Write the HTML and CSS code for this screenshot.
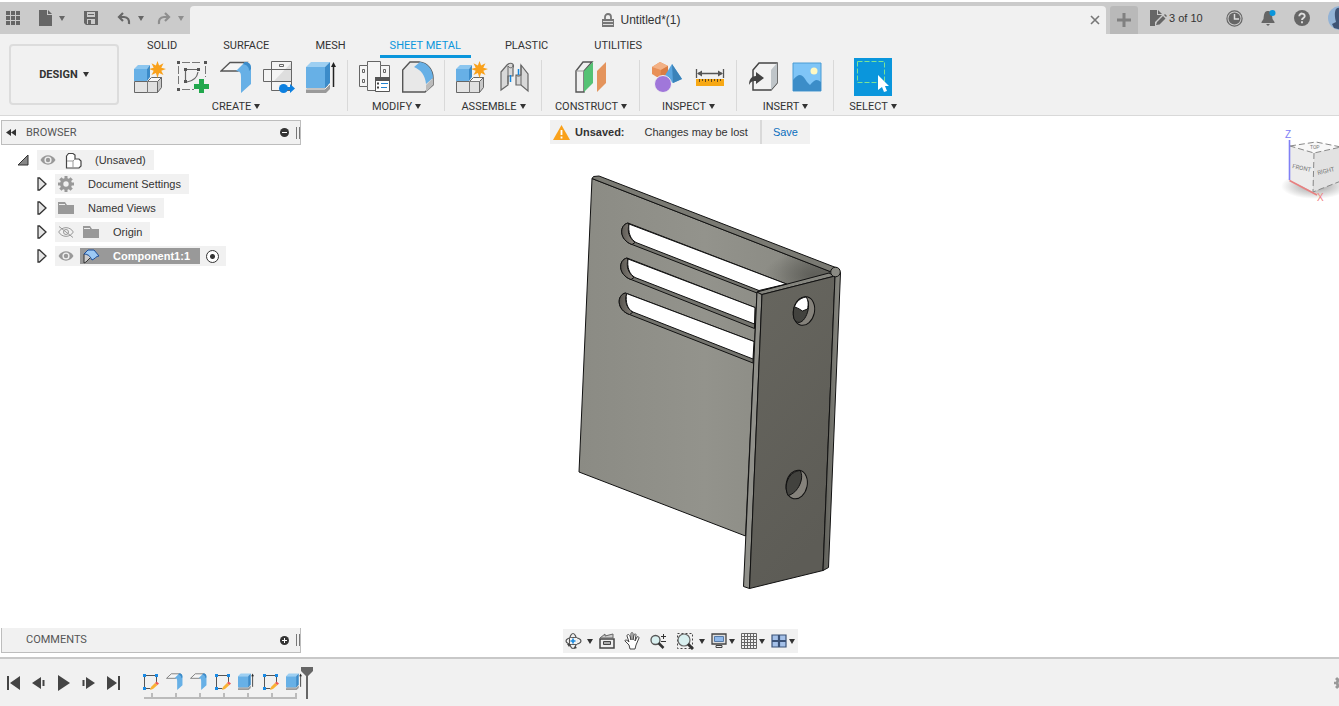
FILE: index.html
```html
<!DOCTYPE html>
<html lang="en">
<head>
<meta charset="utf-8">
<title>Untitled*(1)</title>
<meta name="viewport" content="width=device-width, initial-scale=1">
<link rel="stylesheet" href="styles.css">
</head>
<body>
<svg class="defs" aria-hidden="true">
  <defs>
    <symbol id="component" viewBox="0 0 32 32">
      <path d="M.500 20.500h13v11H.500z" fill="#e4e4e4" stroke="#666"/>
      <path d="M13.500 20.500l4-4h10l-4 4z" fill="#f8f8f8" stroke="#666"/>
      <path d="M13.500 20.500h10v11h-10z" fill="#e0e0e0" stroke="#777"/>
      <path d="M23.500 20.500l4-4v10l-4 5z" fill="#c8c8c8" stroke="#666"/>
      <path d="M0 8h13v12H0z" fill="#67b0e6"/><path d="M0 8l4-4h12l-3 4z" fill="#8cc6ef"/><path d="M13 8l3-4v12l-3 4z" fill="#3b8bc9"/>
      <path d="M23.500 0l1.600 4.500 4.400-2.200-2.200 4.400 4.700 1.300-4.700 1.700 2.200 4.300-4.400-2.100L23.500 17l-1.600-5-4.400 2.100 2.200-4.400-4.700-1.700 4.700-1.300-2.200-4.400 4.400 2.200z" fill="#f9a11b"/>
    </symbol>
    <symbol id="extrude" viewBox="0 0 32 32">
      <path d="M0 28l4-4h20v4l-4 4H0z" fill="#9a9a9a"/><path d="M0 28h19l5-5" fill="none" stroke="#eee"/>
      <path d="M0 6h19v21H0z" fill="#67b0e6"/><path d="M0 6l5-5h19l-5 5z" fill="#9dcff2"/><path d="M19 6l5-5v21l-5 5z" fill="#3b8bc9"/>
      <path d="M27.500 26V5" stroke="#222" stroke-width="1.500"/><path d="M25 6l2.500-5L30 6z" fill="#222"/>
    </symbol>
    <symbol id="flange" viewBox="0 0 32 32">
      <path d="M1 10l9-8.500h17l-9 8.500z" fill="#f5f5f5" stroke="#555" stroke-width="1.300"/>
      <path d="M16 10c5 0 5 3 5 7v15l10-9V8c0-5-2-7-6-7z" fill="#67b0e6"/><path d="M25 1c4 0 6 2 6 7l-2 2c0-4-2-6-6-7z" fill="#3b8bc9"/>
    </symbol>
    <symbol id="sketch" viewBox="0 0 17 18">
      <path d="M2.500 2.500h12v8M2.500 2.500v13h6" fill="none" stroke="#555"/>
      <path d="M1 1h3v3H1zM13 1h3v3h-3zM1 14h3v3H1z" fill="#1a8be6"/>
      <path d="M8 17l1-3 4-4 2.500 2-4.500 4z" fill="#f9b234"/><path d="M13 10l1.500-1.500 2.500 2-1.500 1.500z" fill="#ee5858"/>
    </symbol>
    <symbol id="gear" viewBox="0 0 16 16">
      <path d="M6.500 0h3v2.200l1.400.6 1.600-1.600 2.300 2.300-1.600 1.600.6 1.400H16v3h-2.200l-.6 1.400 1.600 1.600-2.300 2.300-1.600-1.600-1.400.6V16h-3v-2.200l-1.400-.6-1.600 1.600-2.300-2.300 1.600-1.600-.6-1.400H0v-3h2.200l.6-1.400L1.200 3.500l2.300-2.300 1.600 1.600 1.400-.6zM8 5.300a2.700 2.700 0 100 5.400 2.700 2.700 0 000-5.400z" fill="#999" fill-rule="evenodd"/>
    </symbol>
    <symbol id="eye" viewBox="0 0 16 12">
      <path d="M.5 6C4-.2 12-.2 15.500 6 12 12.200 4 12.200.5 6z" fill="#999"/><circle cx="8" cy="6" r="3.600" fill="#f0f0f0"/><circle cx="8" cy="6" r="2.200" fill="#999"/>
    </symbol>
    <symbol id="folder" viewBox="0 0 16 14"><path d="M0 1h7l2 3h7v9H0z" fill="#999"/><path d="M1 3.500h6" stroke="#eee"/></symbol>
    <symbol id="closed" viewBox="0 0 10 14"><path d="M1 1h1.500L9 7l-6.500 6H1z" fill="#e4e4e4" stroke="#333" stroke-width="1.300"/></symbol>
  </defs>
</svg>

<header class="topbar">
  <div class="quick">
    <button class="tool" aria-label="Data panel"><svg width="14" height="14" viewBox="0 0 14 14"><path d="M0 0h4v4H0zM5 0h4v4H5zM10 0h4v4h-4zM0 5h4v4H0zM5 5h4v4H5zM10 5h4v4h-4zM0 10h4v4H0zM5 10h4v4H5zM10 10h4v4h-4z" fill="#666"/></svg></button>
    <button class="tool spaced" aria-label="File"><svg width="13" height="16" viewBox="0 0 13 16"><path d="M0 0h8v5h5v11H0zM9 0l4 4H9z" fill="#666"/></svg><i class="caret"></i></button>
    <button class="tool" aria-label="Save"><svg width="14" height="14" viewBox="0 0 14 14"><path d="M0 0h14v14H2l-2-2z" fill="#666"/><path d="M3 1h8v5H3zM3 8h8v5H3z" fill="#cbcbcb"/><path d="M4 3.500h6" stroke="#666"/><path d="M4 9h3v4H4z" fill="#666"/></svg></button>
    <div class="history">
      <button class="tool spaced" aria-label="Undo"><svg width="14" height="13" viewBox="0 0 14 13"><path d="M6 1L2 5l4 4M2 5h5c4 0 5.500 3 5 7" fill="none" stroke="#666" stroke-width="2.200"/></svg><i class="caret"></i></button>
      <button class="tool spaced faded" aria-label="Redo"><svg width="14" height="13" viewBox="0 0 14 13"><path d="M8 1l4 4-4 4M12 5H7c-4 0-5.500 3-5 7" fill="none" stroke="#666" stroke-width="2.200"/></svg><i class="caret"></i></button>
    </div>
  </div>
  <div class="doc-tab">
    <h1 class="doc-title"><svg width="12" height="14" viewBox="0 0 12 14"><path d="M3 6V4a3 3 0 016 0v2" fill="none" stroke="#777" stroke-width="1.800"/><path d="M0 6h12v8H0z" fill="#777"/><path d="M1 8.500h10M1 11.500h10" stroke="#ddd"/></svg>Untitled*(1)</h1>
    <button class="tool close" aria-label="Close"><svg width="10" height="10" viewBox="0 0 10 10"><path d="M1 1l8 8M9 1L1 9" stroke="#777" stroke-width="1.600"/></svg></button>
  </div>
  <button class="new-tab" aria-label="New tab"><svg width="14" height="14" viewBox="0 0 14 14"><path d="M7 0v14M0 7h14" stroke="#808080" stroke-width="3"/></svg></button>
  <div class="account">
    <button class="tool docs"><svg width="17" height="16" viewBox="0 0 17 16"><path d="M0 0h7v5h5L5 12v4H0zM8 0l4 4H8z" fill="#666"/><path d="M6 15l1-3 6-6 2.500 2.500-6 6zM14 5l1-1 2 2-1 1z" fill="#666"/></svg>3 of 10</button>
    <button class="tool" aria-label="Job status"><svg width="17" height="17" viewBox="0 0 17 17"><circle cx="8.500" cy="8.500" r="7.600" fill="none" stroke="#666" stroke-width="1.200"/><circle cx="8.500" cy="8.500" r="6" fill="#666"/><path d="M8.500 4v5H13" fill="none" stroke="#ddd" stroke-width="1.500"/></svg></button>
    <button class="tool bell" aria-label="Notifications"><svg width="15" height="16" viewBox="0 0 15 16"><path d="M6 1h2c3 1 3 4 3.500 8l2 3v1H.5v-1l2-3C3 5 3 2 6 1zM5 14h4l-2 2z" fill="#666"/><circle cx="11.500" cy="3" r="3" fill="#0a96dc"/></svg></button>
    <button class="tool" aria-label="Help"><svg width="16" height="16" viewBox="0 0 16 16"><circle cx="8" cy="8" r="8" fill="#666"/><path d="M5.300 6.200c0-3.600 5.600-3.400 5.400 0C10.600 8 8 8 8 10M8 11.300v2" fill="none" stroke="#ddd" stroke-width="1.900"/></svg></button>
    <button class="tool" aria-label="Profile"><svg width="24" height="24" viewBox="0 0 24 24"><circle cx="12" cy="12" r="12" fill="#93b3d6"/><path d="M8 3c4-3 9 0 9 5 0 3-2 5-2 7l6 4-7 5-8-2-2-4 4-2c-1-4-2-9 0-13z" fill="#3f5475"/></svg></button>
  </div>
</header>

<div class="ribbon">
  <button class="workspace">DESIGN<i class="caret"></i></button>
  <div class="ribbon-main">
    <nav class="tabs">
      <button class="tab">SOLID</button><button class="tab">SURFACE</button><button class="tab">MESH</button><button class="tab active">SHEET METAL</button><button class="tab">PLASTIC</button><button class="tab">UTILITIES</button>
    </nav>
    <div class="groups">
      <section class="group">
        <div class="icons">
          <button class="tool" aria-label="New component"><svg width="32" height="32"><use href="#component"/></svg></button>
          <button class="tool" aria-label="Create sketch"><svg width="32" height="32" viewBox="0 0 32 32"><path d="M1.500 5v19M5 1.500h20M28.500 5v11M5 28.500h12" fill="none" stroke="#777" stroke-dasharray="8 2"/><path d="M8.500 19V8.500H20M21 11c-1 6-5 9-11 10" fill="none" stroke="#666" stroke-width="1.200"/><path d="M0 0h3v3H0zM27 0h3v3h-3zM0 27h3v3H0zM7 7h3v3H7zM20 7h3v3h-3zM7 19h3v3H7z" fill="#555"/><path d="M22 18h5v5h5v5h-5v4h-5v-4h-5v-5h5z" fill="#22a84d"/></svg></button>
          <button class="tool" aria-label="Flange"><svg width="32" height="32"><use href="#flange"/></svg></button>
          <button class="tool" aria-label="Unfold"><svg width="32" height="32" viewBox="0 0 32 32"><path d="M8.500.500h20v29h-20z" fill="#f4f4f4" stroke="#666"/><path d="M.500 8.500h28v12H.500z" fill="#f4f4f4" stroke="#666"/><path d="M28 2v18H11z" fill="#dedede"/><path d="M8.500 8.500v12M8.500 8.500h20M16.500 3.500h4v2h-4z" fill="none" stroke="#666"/><circle cx="20.500" cy="27.500" r="4.500" fill="#0d80e0"/><path d="M24 26h3v-3l5 4.500-5 4.500v-3h-3z" fill="#0d80e0"/></svg></button>
          <button class="tool" aria-label="Extrude"><svg width="32" height="32"><use href="#extrude"/></svg></button>
        </div>
        <button class="group-label">CREATE<i class="caret"></i></button>
      </section>
      <section class="group">
        <div class="icons">
          <button class="tool" aria-label="Sheet metal rules"><svg width="32" height="32" viewBox="0 0 32 32"><path d="M8.500.500h13v4h9v12h-9v13h-13v-4h-8v-21h8z" fill="#f5f5f5" stroke="#666"/><path d="M8.500 4.500v21M21.500 4.500v12M3.500 8.500h2v3h-2zM3.500 18.500h2v3h-2zM24.500 8.500h2v3h-2z" fill="none" stroke="#666"/><path d="M16.500 16.500h14v14h-14z" fill="#fff" stroke="#555"/><path d="M16 16h15v4H16z" fill="#555"/><path d="M18 22.500h2M18 26.500h2" stroke="#444" stroke-width="2"/><path d="M22 22.500h7M22 26.500h6" stroke="#2383d1"/></svg></button>
          <button class="tool" aria-label="Fillet"><svg width="32" height="32" viewBox="0 0 32 32"><path d="M.700 9L8 1h9c9 1 14 8 14 16v7l-8 7H.700z" fill="#e8e8e8" stroke="#555" stroke-width="1.400"/><path d="M12 6l6-5c8 1 13 8 13 16l-7 6C23 14 19 9 12 6z" fill="#67b0e6"/><path d="M24 24l7-7v7l-7 7z" fill="#bbb"/></svg></button>
        </div>
        <button class="group-label">MODIFY<i class="caret"></i></button>
      </section>
      <section class="group">
        <div class="icons">
          <button class="tool" aria-label="Assemble component"><svg width="32" height="32"><use href="#component"/></svg></button>
          <button class="tool" aria-label="Joint"><svg width="32" height="32" viewBox="0 0 32 32"><path d="M2 11l6-7c3-3 8-2 6 3v8H9v9l-7 5z" fill="#d8d8d8" stroke="#666" stroke-width="1.200"/><path d="M9 5v18M9 5c2 3 5 2 5-1" fill="none" stroke="#666"/><path d="M22 4l7 9v17l-7-6h-5V14h5z" fill="#d8d8d8" stroke="#666" stroke-width="1.200"/><path d="M22 4v20M17 14c2 2 4 1 5 0" fill="none" stroke="#666"/><path d="M11.500 14v7M19.500 8v6" stroke="#1688de" stroke-width="1.500"/></svg></button>
        </div>
        <button class="group-label">ASSEMBLE<i class="caret"></i></button>
      </section>
      <section class="group wide">
        <div class="icons">
          <button class="tool" aria-label="Offset plane"><svg width="32" height="32" viewBox="0 0 32 32"><path d="M1 10l7-9h9l-8 9v21H1z" fill="#f0f0f0" stroke="#555" stroke-width="1.400"/><path d="M1 10h8" stroke="#999"/><path d="M9 10l9-9v21l-9 9z" fill="#55c274"/><path d="M22 10l9-9v21l-9 9z" fill="#e4945c"/></svg></button>
        </div>
        <button class="group-label">CONSTRUCT<i class="caret"></i></button>
      </section>
      <section class="group">
        <div class="icons">
          <button class="tool" aria-label="Interference"><svg width="32" height="32" viewBox="0 0 32 32"><path d="M1 6l8-5 8 4v8l-8 5-8-5z" fill="#e89058"/><path d="M1 6l8-5 8 4-7 4z" fill="#f3b185"/><path d="M10 9l7-4v8l-8 5z" fill="#d97d43"/><path d="M21 3l10 15-9 4-9-6z" fill="#5aa5de"/><path d="M21 3l10 15-9 4z" fill="#3b83b9"/><circle cx="12" cy="23" r="8.500" fill="#a077da" stroke="#f0f0f0"/></svg></button>
          <button class="tool" aria-label="Measure"><svg width="32" height="32" viewBox="0 0 32 32"><path d="M2.500 8v9M29.500 8v9M4 12.500h24" stroke="#555" stroke-width="1.300"/><path d="M3 12.500l5-3v6zM29 12.500l-5-3v6z" fill="#555"/><path d="M2 18h28v7H2z" fill="#f7a814"/><path d="M5.500 18v3M8.500 18v2M11.500 18v3M14.500 18v2M17.500 18v3M20.500 18v2M23.500 18v3M26.500 18v2" stroke="#644a1c"/></svg></button>
        </div>
        <button class="group-label">INSPECT<i class="caret"></i></button>
      </section>
      <section class="group">
        <div class="icons">
          <button class="tool" aria-label="Insert derive"><svg width="32" height="32" viewBox="0 0 32 32"><path d="M5 9l6-7h18v20l-6 7H5z" fill="#f2f2f2" stroke="#444" stroke-width="1.500"/><path d="M23 9l6-7v20l-6 7z" fill="#bfc5c9"/><path d="M1 24c0-6 3-9 7-9v-4l8 6-8 6v-3c-3 0-5 0-7 4z" fill="#424242"/></svg></button>
          <button class="tool" aria-label="Insert image"><svg width="32" height="32" viewBox="0 0 32 32"><path d="M2 2h28v28H2z" fill="#7fc5f7" stroke="#4a9cd4"/><path d="M2 19c6-7 9-7 14 2l3 3c5-6 7-6 11-3v9H2z" fill="#3c8dc8"/><circle cx="23" cy="10" r="3.500" fill="#fff8c2"/></svg></button>
        </div>
        <button class="group-label">INSERT<i class="caret"></i></button>
      </section>
      <section class="group last">
        <div class="icons">
          <button class="tool select-tool" aria-label="Select"><svg width="38" height="38" viewBox="0 0 38 38"><path d="M3.500 3.500h27v21h-27z" fill="none" stroke="#7be495" stroke-dasharray="5 2"/><path d="M24 17v15l4-3 2 5 3-1-2-5h4z" fill="#fff"/></svg></button>
        </div>
        <button class="group-label">SELECT<i class="caret"></i></button>
      </section>
    </div>
  </div>
</div>

<main class="canvas">
  <aside class="left">
    <div class="panel">
      <svg width="10" height="7" viewBox="0 0 10 7"><path d="M5 0v7L0 3.500zM10 0v7L5 3.500z" fill="#333"/></svg>
      <h2 class="panel-title">BROWSER</h2>
      <button class="tool" aria-label="Collapse browser"><svg width="9" height="9" viewBox="0 0 9 9"><circle cx="4.500" cy="4.500" r="4.500" fill="#333"/><path d="M2 4.500h5" stroke="#fff"/></svg></button>
      <i class="grip"></i>
    </div>
    <ul class="tree">
      <li class="node root"><svg width="12" height="12" viewBox="0 0 12 12"><path d="M11 1v10H1z" fill="#888" stroke="#333"/></svg>
        <span class="chip"><svg width="16" height="12"><use href="#eye"/></svg><svg class="part" width="17" height="17" viewBox="0 0 17 17"><path d="M1.500 4l2-2.500h4.500L10 3v4h4l2 2v5l-2 2H1.500z" fill="#fff" stroke="#444" stroke-width="1.200"/><path d="M8 9v7M2 9h6l2-2" fill="none" stroke="#999"/></svg><span class="root-name">(Unsaved)</span></span></li>
      <li class="node"><svg width="10" height="14"><use href="#closed"/></svg><span class="chip"><svg width="16" height="16"><use href="#gear"/></svg><span>Document Settings</span></span></li>
      <li class="node"><svg width="10" height="14"><use href="#closed"/></svg><span class="chip"><svg width="16" height="14"><use href="#folder"/></svg><span>Named Views</span></span></li>
      <li class="node"><svg width="10" height="14"><use href="#closed"/></svg><span class="chip"><svg width="16" height="12" viewBox="0 0 16 12"><path d="M.7 6C4 .2 12 .2 15.300 6 12 11.800 4 11.800.7 6zM1 .5l14 11" fill="none" stroke="#999"/><circle cx="8" cy="6" r="2.500" fill="none" stroke="#999"/></svg><svg class="second" width="16" height="14"><use href="#folder"/></svg><span>Origin</span></span></li>
      <li class="node"><svg width="10" height="14"><use href="#closed"/></svg><span class="chip picked"><svg width="16" height="12"><use href="#eye"/></svg><span class="selected"><svg width="18" height="15" viewBox="0 0 18 15"><path d="M1 5v9l2-1 5-5" fill="#ccc" stroke="#333"/><path d="M1 5l4-4h6c2 2 3 4 5 6-3 0-4 3-7 4-2-4-4-6-8-6z" fill="#9cc9f5" stroke="#1c4f9c"/></svg><span>Component1:1</span></span><input type="radio" class="activate" aria-label="Activate Component1:1" checked></span></li>
    </ul>
    <div class="panel comments">
      <h2 class="panel-title">COMMENTS</h2>
      <button class="tool" aria-label="Expand comments"><svg width="9" height="9" viewBox="0 0 9 9"><circle cx="4.500" cy="4.500" r="4.500" fill="#333"/><path d="M2 4.500h5M4.500 2v5" stroke="#fff"/></svg></button>
      <i class="grip"></i>
    </div>
  </aside>

  <div class="center">
    <div class="notice">
      <svg width="17" height="15" viewBox="0 0 17 15"><path d="M8.500 0L17 15H0z" fill="#f9a11b"/><path d="M8.500 5v5M8.500 11.500v2" stroke="#fff" stroke-width="1.800"/></svg>
      <strong>Unsaved:</strong><span class="message">Changes may be lost</span><a class="save" href="#save">Save</a>
    </div>
    <svg class="model" width="280" height="425" viewBox="570 170 280 425" role="img" aria-label="Sheet metal bracket">
      <defs>
        <linearGradient id="plate" x1="0" y1="0" x2="1" y2="0"><stop offset="0" stop-color="#8b8b84"/><stop offset=".5" stop-color="#93938c"/><stop offset=".8" stop-color="#8c8c85"/><stop offset="1" stop-color="#6c6c66"/></linearGradient>
        <linearGradient id="face" x1="0" y1="0" x2=".3" y2="1"><stop offset="0" stop-color="#67665f"/><stop offset="1" stop-color="#5d5c56"/></linearGradient>
        <radialGradient id="shade"><stop offset="0" stop-color="#4f4f4a" stop-opacity=".6"/><stop offset="1" stop-color="#4f4f4a" stop-opacity="0"/></radialGradient>
        <linearGradient id="bend" x1="0" y1="0" x2="1" y2="0"><stop offset="0" stop-color="#5d5d57"/><stop offset="1" stop-color="#8a8a83"/></linearGradient>
        <linearGradient id="wall" x1="0" y1="0" x2="1" y2="0"><stop offset="0" stop-color="#55524c"/><stop offset="1" stop-color="#8e8982"/></linearGradient>
        <clipPath id="plateClip"><path d="M592 179L830 271.500V274L757 291.500 745 536 579 472z"/></clipPath>
      </defs>
      <g stroke="#111" stroke-linejoin="round">
        <path d="M592 178.500L830 271.500V274L757 292 745.500 536 579 472z" fill="url(#plate)"/>
        <ellipse cx="812" cy="275" rx="48" ry="24" fill="url(#shade)" stroke="none" clip-path="url(#plateClip)"/>
        <path d="M592 178.500L593.500 176.500 599 176 837 268 830 271.500z" fill="#7a7a73"/>
        <path d="M628 223c-9 2-9 17 4 21.500L757 293l2-3L786.500 284z" fill="#74746e"/>
        <path d="M627 258c-9 2-9 17 4 21.500L754.500 328.500 755 307.500z" fill="#74746e"/>
        <path d="M625.500 293c-9 2-9 17 4 21.500L753 363 754 341.500z" fill="#74746e"/>
        <path d="M628 223c-9 2-9 17 4 21.500l3-2c-6-5-8-11-6-18.500zM627 258c-9 2-9 17 4 21.500l3-2c-6-5-8-11-6-18.500zM625.500 293c-9 2-9 17 4 21.500l3-2c-6-5-8-11-6-18.500z" fill="url(#wall)"/>
        <g fill="#fff">
          <path d="M629 224L786.500 284 759 290.500 636 242.500C630 239 628 232 629 224z"/>
          <path d="M628 259L755 307.500 754.500 324 635 277.500C629 274 627 267 628 259z"/>
          <path d="M626.500 293.500L754 341.500 753 359 633 312C627 309 625.500 302 626.500 293.500z"/>
        </g>
        <path d="M757 292L762 294.500 749.500 588.500 743.500 586.500z" fill="#90908a"/>
        <path d="M757 292L829 273 835 276 762 294.500z" fill="#85857e"/>
        <path d="M762 294.500L835 276 823 570.500 749.500 588.500z" fill="url(#face)"/>
        <path d="M835 276L840.500 272.500 828.500 567.500 823 570.500z" fill="url(#bend)"/>
        <circle cx="835.500" cy="272" r="4.800" fill="#8a8a83"/>
        <ellipse cx="804" cy="311" rx="10.500" ry="14.500" transform="rotate(12 804 311)" fill="#85827b"/>
        <path d="M806 297c-9 0-15 11-12 22 7 11 17-7 14-18z" fill="#42423e"/>
        <path d="M806 297c-6 1-10 5-11.500 10 4 1 6 3 8 4l5-2c1-4 1-9-1.500-12z" fill="#fff"/>
        <ellipse cx="796.700" cy="484.500" rx="10.500" ry="14.500" transform="rotate(12 796.700 484.500)" fill="#85827b"/>
        <path d="M800 470.500c-11 1-17 14-12 25 10-2 17-18 12-25z" fill="#42423e"/>
      </g>
    </svg>
    <div class="navbar">
      <button class="tool" aria-label="Orbit"><svg width="17" height="18" viewBox="0 0 17 18"><ellipse cx="8" cy="9" rx="3.500" ry="7.500" fill="#f1f1f1" stroke="#555" stroke-width="1.200"/><ellipse cx="8.500" cy="9" rx="7.500" ry="3.500" fill="none" stroke="#555" stroke-width="1.200"/><path d="M5 6h7v6H5z" fill="#f1f1f1"/><path d="M2 12h4l-2 3zM9 17l3-1-2-2z" fill="#444"/><path d="M8 6.500v5M5.500 9h5" stroke="#1688de" stroke-width="1.600"/></svg><i class="caret"></i></button>
      <button class="tool" aria-label="Look at"><svg width="16" height="18" viewBox="0 0 16 18"><path d="M1 7h14v9H1z" fill="#eee" stroke="#444" stroke-width="1.500"/><path d="M4.500 9.500h7v3h-7z" fill="#aaa" stroke="#444"/><path d="M1 6l5-4v2l8-2v4z" fill="#ccc" stroke="#666"/></svg></button>
      <button class="tool gap-left" aria-label="Pan"><svg width="17" height="18" viewBox="0 0 17 18"><path d="M6 17l-1-4-4-4c0-2 2-1 4 1L3 4c0-2 2-2 3 0l1 4V2c0-2 2-2 2 0v6l1-5c1-2 2-1 2 0l-1 6 2-4c1-1 2 0 2 1l-3 7-1 4z" fill="#fff" stroke="#444"/></svg></button>
      <button class="tool gap-left" aria-label="Zoom"><svg width="17" height="18" viewBox="0 0 17 18"><circle cx="5.500" cy="8" r="4.500" fill="#d9f0f0" stroke="#555" stroke-width="1.300"/><path d="M8.500 11l5 5" stroke="#333" stroke-width="2.500"/><path d="M11 4.500h5M13.500 2v5M11 9.500h5" stroke="#333"/></svg></button>
      <button class="tool gap-left" aria-label="Fit"><svg width="18" height="18" viewBox="0 0 18 18"><path d="M1.500 1.500h15v15h-15z" fill="none" stroke="#444" stroke-dasharray="2 2"/><circle cx="8" cy="8" r="6" fill="#d9f0f0" stroke="#666" stroke-width="1.200"/><path d="M12 12l5 5" stroke="#333" stroke-width="3"/></svg><i class="caret"></i></button>
      <button class="tool tight" aria-label="Display settings"><svg width="16" height="16" viewBox="0 0 16 16"><path d="M1 1h14v10H1z" fill="#ddd" stroke="#444" stroke-width="1.300"/><path d="M3.500 3.500h9v5h-9z" fill="#8fb8ea" stroke="#567ba8"/><path d="M5 12.500h6v2H5z" fill="#eee" stroke="#444"/></svg><i class="caret"></i></button>
      <button class="tool tight" aria-label="Grid settings"><svg width="16" height="16" viewBox="0 0 16 16"><path d="M.5.500h15v15H.5zM3.500 0v16M6.500 0v16M9.500 0v16M12.500 0v16M0 3.500h16M0 6.500h16M0 9.500h16M0 12.500h16" fill="none" stroke="#666"/></svg><i class="caret"></i></button>
      <button class="tool tight" aria-label="Viewports"><svg width="16" height="16" viewBox="0 0 16 16"><path d="M1 2h6.500v5.500H1zM8.500 2H15v5.500H8.500zM1 8.500h6.500V14H1zM8.500 8.500H15V14H8.500z" fill="#a4c0e8" stroke="#3b5277" stroke-width="1.200"/></svg><i class="caret"></i></button>
    </div>
  </div>

  <div class="right">
    <svg class="cube" width="59" height="90" viewBox="1280 122 59 90" role="img" aria-label="View cube">
      <defs><radialGradient id="ground"><stop offset="0" stop-color="#999"/><stop offset="1" stop-color="#999" stop-opacity="0"/></radialGradient></defs>
      <ellipse cx="1315" cy="186" rx="34" ry="13" fill="url(#ground)"/>
      <path d="M1290 146L1316 142 1341 147 1314 153z" fill="#f8f8f8"/><path d="M1290 146L1314 153 1313 192 1290 180z" fill="#ececec"/><path d="M1314 153L1341 147V181L1313 192z" fill="#e2e2e2"/>
      <path d="M1290 146L1316 142 1341 147 1314 153zM1314 153L1313 192 1341 181" fill="none" stroke="#888" stroke-dasharray="6 3"/>
      <path d="M1289.500 140v40" stroke="#8080f5" stroke-width="1.600"/><path d="M1289.500 180.500L1317 195" stroke="#e88080" stroke-width="1.600"/>
      <text class="face" x="1292" y="168" transform="rotate(12 1292 168)">FRONT</text>
      <text class="face" x="1318" y="175" transform="rotate(-14 1318 175)">RIGHT</text>
      <text class="face top" x="1310" y="149">TOP</text>
      <text class="axis z" x="1285" y="138">Z</text><text class="axis x" x="1317" y="201">X</text>
    </svg>
  </div>
</main>

<footer class="timeline">
  <div class="playback">
    <button class="tool" aria-label="Go to start"><svg width="13" height="14" viewBox="0 0 13 14"><path d="M0 0h2v14H0zM13 0v14L3 7z" fill="#444"/></svg></button>
    <button class="tool" aria-label="Step back"><svg width="13" height="12" viewBox="0 0 13 12"><path d="M9 0v12L0 6zM10.500 3h2v6h-2z" fill="#444"/></svg></button>
    <button class="tool" aria-label="Play"><svg width="12" height="16" viewBox="0 0 12 16"><path d="M0 0l12 8-12 8z" fill="#444"/></svg></button>
    <button class="tool" aria-label="Step forward"><svg width="13" height="12" viewBox="0 0 13 12"><path d="M4 0v12l9-6zM.5 3h2v6h-2z" fill="#444"/></svg></button>
    <button class="tool" aria-label="Go to end"><svg width="13" height="14" viewBox="0 0 13 14"><path d="M11 0h2v14h-2zM0 0v14l10-7z" fill="#444"/></svg></button>
  </div>
  <div class="features">
    <button class="tool feature" aria-label="Sketch 1"><svg width="17" height="18"><use href="#sketch"/></svg></button>
    <button class="tool feature" aria-label="Flange 1"><svg width="17" height="17"><use href="#flange"/></svg></button>
    <button class="tool feature" aria-label="Flange 2"><svg width="17" height="17"><use href="#flange"/></svg></button>
    <button class="tool feature" aria-label="Sketch 2"><svg width="17" height="18"><use href="#sketch"/></svg></button>
    <button class="tool feature" aria-label="Extrude 1"><svg width="17" height="17"><use href="#extrude"/></svg></button>
    <button class="tool feature" aria-label="Sketch 3"><svg width="17" height="18"><use href="#sketch"/></svg></button>
    <button class="tool feature" aria-label="Extrude 2"><svg width="17" height="17"><use href="#extrude"/></svg></button>
    <svg class="marker" width="12" height="32" viewBox="0 0 12 32"><path d="M0 0h12v4L7 9v23H5V9L0 4z" fill="#666"/></svg>
  </div>
  <button class="tool settings" aria-label="Timeline settings"><svg width="14" height="14" viewBox="0 0 16 16"><use href="#gear"/></svg></button>
</footer>
</body>
</html>
```
FILE: styles.css
```css
* { box-sizing: border-box; }

body {
  margin: 0;
  min-height: 100vh;
  display: flex;
  flex-direction: column;
  overflow-x: hidden;
  background: #fff;
  color: #333;
  font: 11px/16px "Liberation Sans", Arial, sans-serif;
}

svg { display: block; flex: none; }
.defs { position: absolute; width: 0; height: 0; }
h1, h2 { margin: 0; font-weight: normal; }

button {
  padding: 0;
  border: 0;
  background: none;
  color: inherit;
  font: inherit;
}

.tool { display: flex; align-items: center; flex: none; }

.caret {
  flex: none;
  border: 3px solid transparent;
  border-top: 5px solid #333;
  border-bottom: 0;
}

/* Title bar */
.topbar {
  display: flex;
  align-items: stretch;
  height: 34px;
  padding-top: 4px;
  border-top: 2px solid #fff;
  background: #cbcbcb;
}

.quick {
  width: 190px;
  display: flex;
  align-items: center;
  gap: 19px;
  padding: 0 0 4px 6px;
}
.spaced { gap: 7px; }
.history { display: flex; gap: 13px; }
.faded { opacity: .6; }
.topbar .caret { border-top-color: #666; }

.doc-tab {
  flex: 1;
  display: flex;
  align-items: center;
  padding-left: 3px;
  border-radius: 4px 4px 0 0;
  background: #f1f1f1;
}
.doc-title {
  flex: 1;
  display: flex;
  justify-content: center;
  align-items: center;
  gap: 6px;
  font-size: 12px;
}
.close { margin-right: 6px; }

.new-tab {
  width: 28px;
  margin-left: 4px;
  display: grid;
  place-items: center;
  border-radius: 3px 3px 0 0;
  background: #b9b9b9;
}

.account {
  width: 201px;
  display: flex;
  align-items: center;
  gap: 18px;
  padding: 0 0 4px 12px;
  overflow: hidden;
}
.docs { gap: 2px; margin-right: 5px; white-space: nowrap; }

/* Ribbon */
.ribbon {
  display: flex;
  padding-left: 9px;
  border-bottom: 1px solid #d9d9d9;
  background: #f1f1f1;
  font-family: Roboto, "Liberation Sans", sans-serif;
}

.workspace {
  width: 110px;
  margin: 10px 5px 10px 0;
  display: flex;
  justify-content: center;
  align-items: center;
  gap: 5px;
  border: 2px solid #dcdcdc;
  border-radius: 4px;
  font-weight: bold;
}

.tabs { display: flex; gap: 22px; padding-left: 11px; }
.tab {
  height: 24px;
  padding: 2px 12px 0;
  border-bottom: 3px solid transparent;
}
.tab.active { padding: 2px 10px 0; border-color: #0a96dc; color: #0a96dc; }

.groups { display: flex; align-items: flex-start; }
.group {
  min-width: 97px;
  display: flex;
  flex-direction: column;
  align-items: center;
  padding: 0 10px;
  background: linear-gradient(#d9d9d9, #d9d9d9) right 2px / 1px 51px no-repeat;
}
.group.wide { min-width: 98px; }
.group.last { min-width: 78px; background: none; }
.icons { height: 38px; display: flex; align-items: center; gap: 11px; }
.select-tool { background: #0a96dc; }
.group-label {
  height: 19px;
  display: flex;
  align-items: center;
  gap: 3px;
  padding-top: 2px;
}

/* Workspace */
.canvas {
  flex: 1;
  display: grid;
  grid-template-columns: 301px 1fr 280px;
}

.left { display: flex; flex-direction: column; padding: 4px 0 4px 1px; }
.panel {
  height: 25px;
  display: flex;
  align-items: center;
  padding-left: 4px;
  border: 1px solid #bdbdbd;
  background: #f1f1f1;
}
.panel-title {
  flex: 1;
  margin-left: 10px;
  color: #555;
  font: 11px/16px Roboto, "Liberation Sans", sans-serif;
}
.grip {
  width: 4px;
  height: 12px;
  margin-left: 7px;
  border: solid #777;
  border-width: 0 1px;
}
.comments { margin-top: auto; padding-left: 14px; border-top: 0; }

.tree { margin: 3px 0 0; padding: 0; list-style: none; }
.node { height: 24px; display: flex; align-items: center; gap: 8px; padding-left: 36px; }
.node.root { padding-left: 16px; }
.chip {
  height: 20px;
  display: flex;
  align-items: center;
  gap: 14px;
  padding: 0 8px 0 3px;
  background: #f1f1f1;
}
.root .chip { gap: 9px; }
.root-name { margin-left: 4px; }
.second { margin-left: -5px; }
.picked { gap: 6px; padding-right: 7px; }
.selected {
  height: 16px;
  display: flex;
  align-items: center;
  gap: 12px;
  padding: 0 10px 0 3px;
  background: #999;
  color: #fff;
  font-weight: bold;
}
.activate {
  appearance: none;
  width: 13px;
  height: 13px;
  margin: 0;
  border: 1px solid #333;
  border-radius: 50%;
  background: radial-gradient(circle, #333 2px, #fff 3px);
}

.center {
  display: flex;
  flex-direction: column;
  align-items: center;
  padding: 4px 0;
}
.notice {
  height: 24px;
  display: flex;
  align-items: center;
  padding-left: 3px;
  background: #f1f1f1;
}
.notice strong { margin-left: 5px; }
.message { margin: 0 12px 0 20px; }
.save {
  padding: 4px 12px 4px 11px;
  border-left: 2px solid #d9d9d9;
  color: #0a6ebd;
  text-decoration: none;
}
.model { margin: 26px 0 34px 60px; }

.navbar {
  height: 24px;
  margin-top: auto;
  display: flex;
  align-items: center;
  gap: 6px;
  padding: 0 3px 0 2px;
  background: #f1f1f1;
}
.navbar .tool { gap: 5px; }
.navbar .tight { gap: 2px; }
.navbar .gap-left { margin-left: 3px; }

.right { display: flex; justify-content: flex-end; padding-top: 6px; }
.face { fill: #777; font: 6px Roboto, "Liberation Sans", sans-serif; }
.face.top { font-size: 5px; }
.axis { font-size: 10px; }
.axis.z { fill: #8080f5; }
.axis.x { fill: #f08080; }

/* Timeline */
.timeline {
  height: 49px;
  display: flex;
  align-items: center;
  padding-left: 1px;
  border-top: 2px solid #c8c8c8;
  background: #f1f1f1;
  overflow: hidden;
}
.playback { display: flex; }
.playback .tool { width: 25px; height: 25px; justify-content: center; }
.features { position: relative; display: flex; margin-left: 12px; }
.feature {
  width: 24px;
  height: 32px;
  justify-content: center;
  padding-bottom: 2px;
  background:
    linear-gradient(#bbb, #bbb) 13px 26px / 2px 6px no-repeat,
    linear-gradient(#bbb, #bbb) 0 30px / 24px 2px no-repeat;
}
.feature:first-child {
  background-position: 13px 26px, 6px 30px;
}
.feature:nth-child(7) {
  background-size: 2px 6px, 15px 2px;
}
.marker { position: absolute; top: 0; right: -7px; }
.settings { margin: 0 -9px 0 auto; }
```
